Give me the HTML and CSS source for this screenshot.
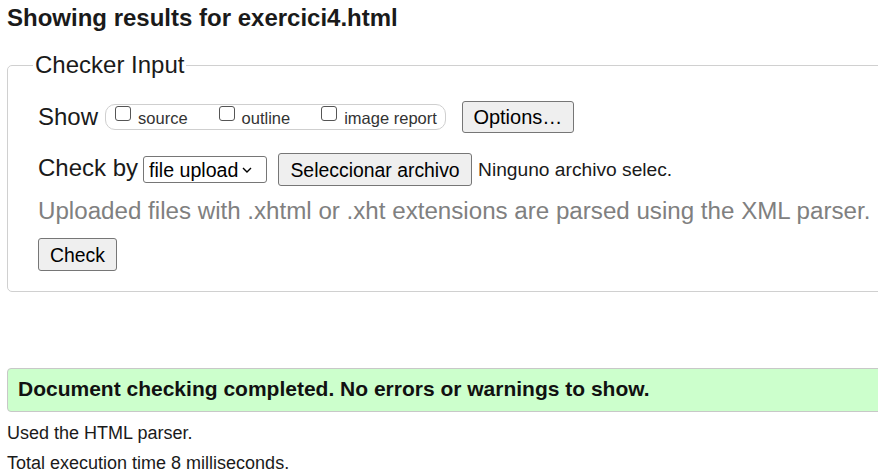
FILE: index.html
```html
<!DOCTYPE html>
<html lang="en">
<head>
<meta charset="utf-8">
<title>Showing results for exercici4.html</title>
<link rel="stylesheet" href="styles.css">
</head>
<body>
<div class="page">
  <h2 class="title">Showing results for exercici4.html</h2>
  <fieldset class="checker">
    <legend class="checker-legend">Checker Input</legend>
    <div class="row row-show">
      <span class="row-label">Show</span>
      <span class="opts">
        <label class="opt"><input type="checkbox" class="cb"><span class="opt-text">source</span></label>
        <label class="opt"><input type="checkbox" class="cb"><span class="opt-text">outline</span></label>
        <label class="opt"><input type="checkbox" class="cb"><span class="opt-text">image report</span></label>
      </span>
      <button type="button" class="btn btn-options">Options…</button>
    </div>
    <div class="row row-check">
      <span class="row-label">Check by</span>
      <span class="select-wrap">
        <select class="select"><option>file upload</option></select>
        <svg class="chev" width="10" height="6" viewBox="0 0 10 6"><path d="M1 1 L5 5 L9 1" fill="none" stroke="#000" stroke-width="1.4"/></svg>
      </span>
      <button type="button" class="btn btn-file">Seleccionar archivo</button>
      <span class="file-name">Ninguno archivo selec.</span>
    </div>
    <p class="hint">Uploaded files with .xhtml or .xht extensions are parsed using the XML parser.</p>
    <div class="row row-submit">
      <button type="button" class="btn btn-check">Check</button>
    </div>
  </fieldset>
  <div class="success">Document checking completed. No errors or warnings to show.</div>
  <p class="stats">Used the HTML parser.</p>
  <p class="stats">Total execution time 8 milliseconds.</p>
</div>
</body>
</html>
```
FILE: styles.css
```css
html, body {
  margin: 0;
  background: #fff;
}
body {
  padding: 0 0 0 7px;
  font-family: "Liberation Sans", Arial, sans-serif;
  color: #000;
  overflow: hidden;
}
.page {
  width: 1000px;
}
.title {
  font-size: 24px;
  font-weight: bold;
  line-height: 28px;
  margin: 4px 0 19px;
  color: #1a1a1a;
}
.checker {
  margin: 0;
  border: 1px solid #d0d0d0;
  border-radius: 5px;
  padding: 21px 20px 20px 30px;
  min-width: 0;
}
.checker-legend {
  font-size: 24px;
  line-height: 28px;
  padding: 0 2px;
  margin-left: -5px;
  color: #1a1a1a;
}
.row {
  display: flex;
  align-items: center;
}
.row-show {
  height: 34px;
}
.row-label {
  font-size: 24px;
  line-height: 28px;
  color: #1a1a1a;
}
.opts {
  display: flex;
  align-items: flex-start;
  height: 26px;
  box-sizing: border-box;
  border: 1px solid #cfcfcf;
  border-radius: 10px;
  padding: 0 8px 0 9px;
  margin-left: 7px;
}
.opt {
  display: flex;
  align-items: flex-start;
}
.opt + .opt {
  margin-left: 31px;
}
.cb {
  appearance: none;
  -webkit-appearance: none;
  width: 16px;
  height: 15px;
  margin: 1px 7px 0 0;
  border: 1px solid #555;
  border-radius: 3px;
  background: #fff;
  box-sizing: border-box;
}
.opt-text {
  font-size: 16.5px;
  line-height: 20px;
  margin-top: 3px;
  color: #333;
}
.btn {
  font-family: "Liberation Sans", Arial, sans-serif;
  font-size: 19.4px;
  color: #000;
  background: #efefef;
  border: 1px solid #767676;
  border-radius: 3px;
  box-sizing: border-box;
  padding: 0;
  line-height: 28px;
  margin: 0;
}
.btn-options {
  margin-left: 16px;
  width: 112px;
  height: 32px;
  font-size: 20px;
}
.row-check {
  height: 35px;
  margin-top: 18px;
}
.row-check .row-label {
  margin-top: -3px;
}
.select-wrap {
  position: relative;
  display: inline-flex;
  margin-left: 5px;
}
.select {
  appearance: none;
  -webkit-appearance: none;
  width: 124px;
  height: 27px;
  box-sizing: border-box;
  border: 1px solid #767676;
  border-radius: 3px;
  background: #fff;
  padding: 0 0 0 5px;
  font-family: "Liberation Sans", Arial, sans-serif;
  font-size: 19.6px;
  color: #000;
  margin: 0;
}
.chev {
  position: absolute;
  right: 15px;
  top: 11px;
  pointer-events: none;
}
.btn-file {
  margin-left: 11px;
  width: 194px;
  height: 33px;
}
.file-name {
  margin-left: 6px;
  font-size: 19.2px;
  color: #1a1a1a;
}
.hint {
  margin: 10px 0 0;
  font-size: 24.15px;
  line-height: 28px;
  color: #808080;
  white-space: nowrap;
}
.row-submit {
  margin-top: 13px;
}
.btn-check {
  width: 79px;
  height: 33px;
}
.success {
  margin-top: 76px;
  height: 44px;
  box-sizing: border-box;
  border: 1px solid #c8c8c8;
  border-radius: 4px;
  background: #ccffcc;
  padding: 0 0 0 10px;
  font-size: 21px;
  font-weight: bold;
  line-height: 40px;
  color: #111;
}
.stats {
  margin: 6px 0 0;
  font-size: 18px;
  line-height: 30px;
  color: #1a1a1a;
}
.stats + .stats {
  margin-top: 0;
}
```
